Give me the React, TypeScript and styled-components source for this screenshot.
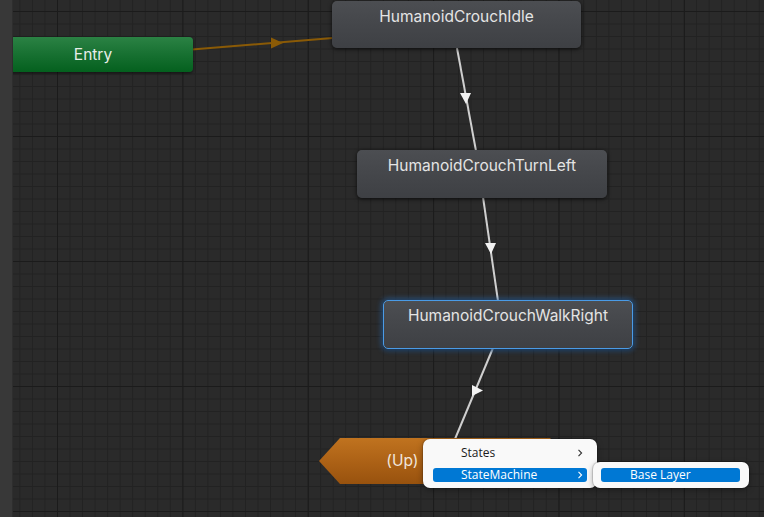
import React from "react";
import styled, { createGlobalStyle, css } from "styled-components";

const Global = createGlobalStyle`
  html, body { margin: 0; padding: 0; background: #2a2a2a; }
  #root { width: 764px; height: 517px; }
`;

const Window = styled.div`
  display: flex;
  width: 764px;
  height: 517px;
  overflow: hidden;
`;

const SideStrip = styled.div`
  width: 13px;
  flex: none;
  background: #383838;
  box-shadow: inset -1px 0 0 #2e2e2e;
`;

const Canvas = styled.div`
  position: relative;
  flex: 1;
  overflow: hidden;
  background-color: #2a2a2a;
  background-image:
    linear-gradient(to right, #1b1b1b 1px, transparent 1px),
    linear-gradient(to bottom, #1b1b1b 1px, transparent 1px),
    linear-gradient(to right, #222222 1px, transparent 1px),
    linear-gradient(to bottom, #222222 1px, transparent 1px);
  background-size: 125.4px 125px, 125.4px 125px, 12.54px 12.5px, 12.54px 12.5px;
  background-position: 44px 11px, 44px 11px, 44px 11px, 44px 11px;
`;

const Links = styled.svg`
  position: absolute;
  left: 0;
  top: 0;
`;

type Variant = "entry" | "state" | "selected" | "machine";

const NodeBox = styled.div<{ $x: number; $y: number; $w: number; $h: number; $variant: Variant }>`
  position: absolute;
  left: ${(p) => p.$x - 13}px;
  top: ${(p) => p.$y}px;
  width: ${(p) => p.$w}px;
  height: ${(p) => p.$h}px;
  box-sizing: border-box;
  display: flex;
  justify-content: center;
  font-family: Inter, "Noto Sans", sans-serif;
  font-size: 15.5px;
  line-height: 20px;
  white-space: nowrap;
  ${(p) =>
    p.$variant === "entry" &&
    css`
      align-items: center;
      border-radius: 4px;
      background: linear-gradient(to bottom, #2b8244 0%, #197233 45%, #04601e 100%);
      color: #e8eee9;
      box-shadow: 0 1px 3px rgba(0, 0, 0, 0.6);
    `}
  ${(p) =>
    (p.$variant === "state" || p.$variant === "selected") &&
    css`
      align-items: flex-start;
      padding-top: 6px;
      border-radius: 5px;
      background: linear-gradient(to bottom, #4c4e52 0%, #46484c 40%, #3e4044 100%);
      color: #e4e4e4;
      box-shadow: 0 1px 4px rgba(0, 0, 0, 0.7);
    `}
  ${(p) =>
    p.$variant === "selected" &&
    css`
      border: 1px solid #4a9be6;
      padding-top: 5px;
      box-shadow: 0 0 5px 2px rgba(50, 130, 220, 0.45), 0 1px 4px rgba(0, 0, 0, 0.7);
    `}
  ${(p) =>
    p.$variant === "machine" &&
    css`
      align-items: center;
      clip-path: polygon(21px 0, calc(100% - 21px) 0, 100% 50%, calc(100% - 21px) 100%, 21px 100%, 0 50%);
      background: linear-gradient(to bottom, #c0731f 0%, #ad6216 50%, #98520e 100%);
      color: #f1e6dc;
    `}
`;

const MenuPanel = styled.div<{ $x: number; $y: number; $w: number; $pad: string }>`
  position: absolute;
  left: ${(p) => p.$x - 13}px;
  top: ${(p) => p.$y}px;
  width: ${(p) => p.$w}px;
  box-sizing: border-box;
  display: flex;
  flex-direction: column;
  gap: 8px;
  padding: ${(p) => p.$pad};
  background: #f9f9f9;
  border-radius: 7px;
  box-shadow: 0 0 0 1px rgba(0, 0, 0, 0.12), 0 2px 6px rgba(0, 0, 0, 0.35);
  font-family: "Open Sans", "Noto Sans", sans-serif;
  font-size: 12px;
`;

const MenuItem = styled.div<{ $active?: boolean; $indent: number }>`
  position: relative;
  height: 14px;
  line-height: 14px;
  padding-left: ${(p) => p.$indent}px;
  border-radius: 3px;
  color: ${(p) => (p.$active ? "#ffffff" : "#1b1b1b")};
  background: ${(p) => (p.$active ? "#0078d4" : "transparent")};
`;

const Chevron = styled.svg`
  position: absolute;
  right: 4px;
  top: 3px;
`;

const ChevronIcon = ({ color }: { color: string }) => (
  <Chevron width="6" height="8" viewBox="0 0 6 8">
    <path d="M1.5 0.8 L4.6 4 L1.5 7.2" fill="none" stroke={color} strokeWidth="1.1" />
  </Chevron>
);

export default function App() {
  return (
    <Window>
      <Global />
      <SideStrip />
      <Canvas>
        <Links width="751" height="517" viewBox="13 0 751 517">
          <line x1="192" y1="49.5" x2="333" y2="38" stroke="#8a5a06" strokeWidth="2" />
          <polygon points="271,37.5 283,43 271,48.5" fill="#8a5a06" />
          <line x1="457" y1="48" x2="476" y2="151" stroke="#cfcfcf" strokeWidth="2" />
          <polygon points="460,93 471,93 466,104" fill="#f2f2f2" />
          <line x1="483" y1="197" x2="498" y2="301" stroke="#cfcfcf" strokeWidth="2" />
          <polygon points="485,243 496,243 491,254" fill="#f2f2f2" />
          <line x1="493" y1="348" x2="455" y2="439" stroke="#cfcfcf" strokeWidth="2" />
          <polygon points="472,385 483,390.5 472,396" fill="#f2f2f2" />
        </Links>

        <NodeBox $variant="entry" $x={-7} $y={37} $w={200} $h={35}>
          Entry
        </NodeBox>
        <NodeBox $variant="state" $x={332} $y={1} $w={249} $h={47}>
          HumanoidCrouchIdle
        </NodeBox>
        <NodeBox $variant="state" $x={357} $y={150} $w={250} $h={48}>
          HumanoidCrouchTurnLeft
        </NodeBox>
        <NodeBox $variant="selected" $x={383} $y={300} $w={250} $h={49}>
          HumanoidCrouchWalkRight
        </NodeBox>
        <NodeBox $variant="machine" $x={319} $y={438} $w={252} $h={46}>
          (Up) Base Layer
        </NodeBox>

        <MenuPanel $x={423} $y={439} $w={174} $pad="7px 10px 6px">
          <MenuItem $indent={28}>
            States
            <ChevronIcon color="#333" />
          </MenuItem>
          <MenuItem $active $indent={28}>
            StateMachine
            <ChevronIcon color="#ffffff" />
          </MenuItem>
        </MenuPanel>
        <MenuPanel $x={593} $y={462} $w={156} $pad="6px 9px 6px 8px">
          <MenuItem $active $indent={29}>
            Base Layer
          </MenuItem>
        </MenuPanel>
      </Canvas>
    </Window>
  );
}
